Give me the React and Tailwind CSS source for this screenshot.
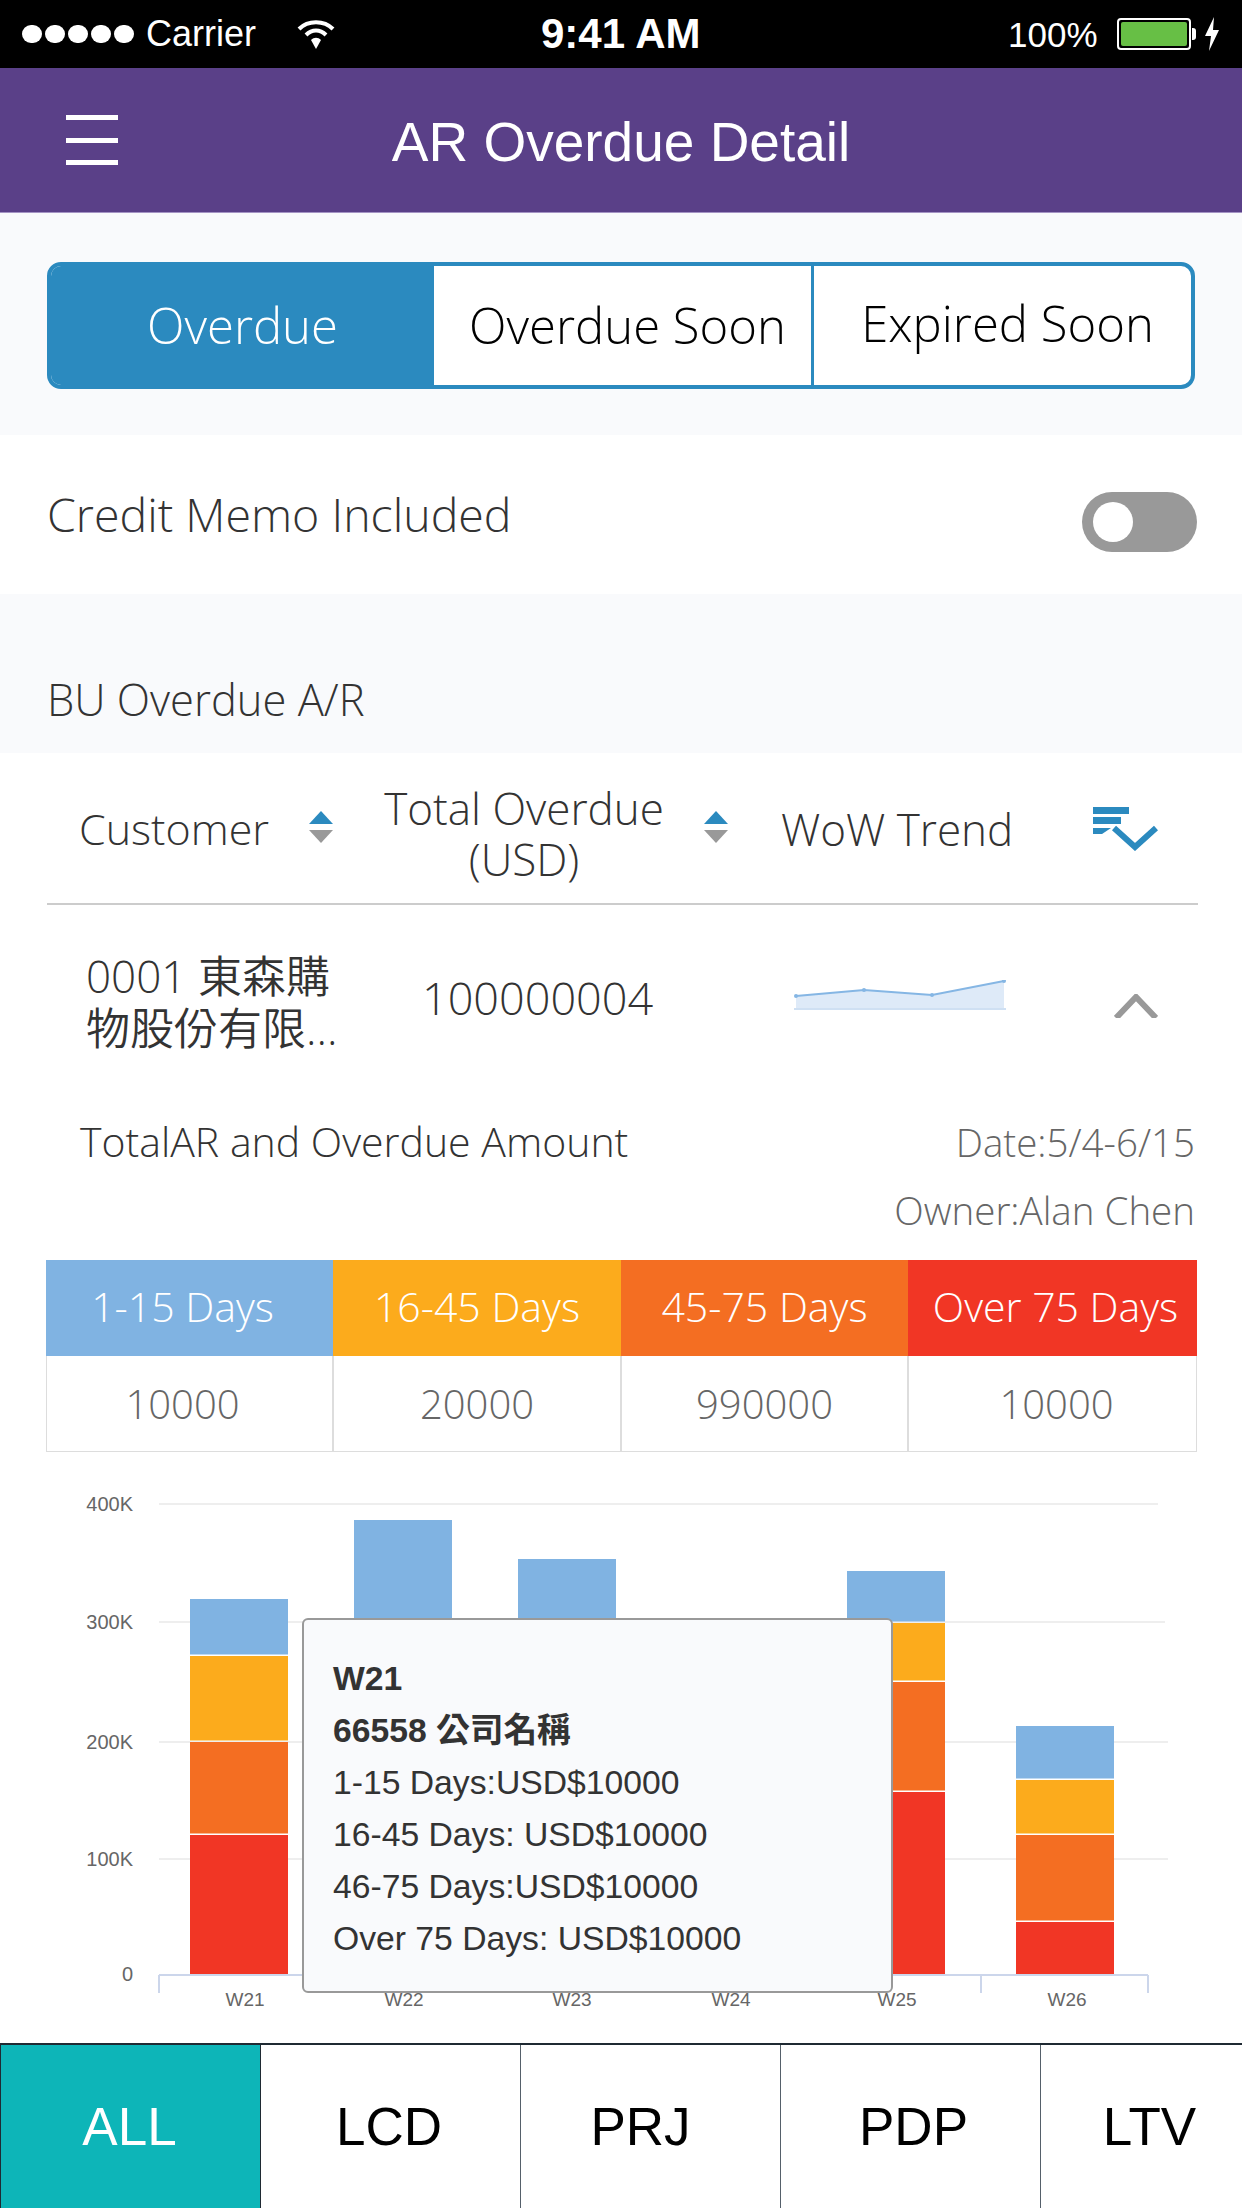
import React from "react";

const OPEN = "font-['Open_Sans',sans-serif]";

const DAY_BUCKETS = [
  { label: "1-15 Days", value: "10000", color: "bg-[#80b3e2]", width: "w-[287px]", head: "pr-[14px]", cell: "pr-[14px]" },
  { label: "16-45 Days", value: "20000", color: "bg-[#fcab1c]", width: "w-[288px]", head: "", cell: "" },
  { label: "45-75 Days", value: "990000", color: "bg-[#f46e22]", width: "w-[287px]", head: "", cell: "" },
  { label: "Over 75 Days", value: "10000", color: "bg-[#f13625]", width: "w-[289px]", head: "pl-[6px]", cell: "pl-[8px]" },
];

const BARS = [
  { x: 190, tops: [1599, 1656, 1742, 1835] },
  { x: 354, tops: [1520, 1640, 1742, 1840] },
  { x: 518, tops: [1559, 1640, 1742, 1840] },
  { x: 847, tops: [1571, 1623, 1682, 1792] },
  { x: 1016, tops: [1726, 1780, 1835, 1922] },
];
const BAR_COLORS = ["#80b3e2", "#fcab1c", "#f46e22", "#f13625"];

const GRID = [
  { y: 1504, label: "400K", end: 1158 },
  { y: 1622, label: "300K", end: 1165 },
  { y: 1742, label: "200K", end: 1168 },
  { y: 1859, label: "100K", end: 1168 },
];

const WEEKS = [
  { x: 245, label: "W21" },
  { x: 404, label: "W22" },
  { x: 572, label: "W23" },
  { x: 731, label: "W24" },
  { x: 897, label: "W25" },
  { x: 1067, label: "W26" },
];

function SortIcon() {
  return (
    <svg width="26" height="34" viewBox="0 0 26 34" className="shrink-0">
      <path d="M13 0 L25 13 H1 Z" fill="#2b8abf" />
      <path d="M1 19 H25 L13 32 Z" fill="#999999" />
    </svg>
  );
}

function StatusBar() {
  return (
    <div className="flex h-[68px] items-center bg-black text-white font-['Liberation_Sans',sans-serif]">
      <div className="ml-[22px] flex gap-[3px]">
        {[0, 1, 2, 3, 4].map((i) => (
          <div key={i} className="h-[18px] w-[20px] rounded-full bg-white" />
        ))}
      </div>
      <span className="ml-[12px] w-[112px] text-[36px] leading-none">Carrier</span>
      <svg width="40" height="32" viewBox="0 0 40 32" className="ml-[38px]">
        <path d="M3 11 C12 2 28 2 37 11" fill="none" stroke="#fff" strokeWidth="4" />
        <path d="M10 17 C16 11 24 11 30 17" fill="none" stroke="#fff" strokeWidth="4" />
        <path d="M15 22 L20 31 L25 22 C22 19 18 19 15 22 Z" fill="#fff" />
      </svg>
      <span className="ml-[205px] w-[180px] text-[42px] font-bold leading-none">9:41 AM</span>
      <span className="ml-[287px] text-[35px] leading-none">100%</span>
      <div className="relative ml-[19px] h-[32px] w-[74px] rounded-[4px] border-2 border-white p-[2px]">
        <div className="h-full w-full rounded-[2px] bg-[#67bf45]" />
        <div className="absolute right-[-7px] top-[8px] h-[12px] w-[4px] rounded-r-[3px] bg-white" />
      </div>
      <svg width="16" height="34" viewBox="0 0 16 34" className="ml-[13px]">
        <path d="M10 0 L1 19 H7 L5 34 L15 13 H9 Z" fill="#fff" />
      </svg>
    </div>
  );
}

function Header() {
  return (
    <div className="relative flex h-[145px] items-center justify-center border-b border-b-[#a493c4] bg-[#5a4088] pt-[4px]">
      <div className="absolute left-[66px] top-[47px] flex h-[50px] w-[52px] flex-col justify-between">
        <div className="h-[5px] bg-white" />
        <div className="h-[5px] bg-white" />
        <div className="h-[5px] bg-white" />
      </div>
      <span className="text-[55px] text-white font-['Liberation_Sans',sans-serif]">AR Overdue Detail</span>
    </div>
  );
}

function Segments() {
  return (
    <div className="h-[222px] bg-[#f9fafc] pl-[47px] pt-[49px]">
      <div className={`flex h-[127px] w-[1148px] overflow-hidden rounded-[14px] border-4 border-[#2b8abf] bg-white text-[49px] font-[350] text-black ${OPEN}`}>
        <div className="flex w-[383px] items-center justify-center bg-[#2b8abf] text-white">Overdue</div>
        <div className="flex w-[380px] items-center justify-center whitespace-nowrap border-r-[3px] border-r-[#2b8abf] pl-[10px]">Overdue Soon</div>
        <div className="flex flex-1 items-center justify-center whitespace-nowrap pb-[4px] pl-[10px]">Expired Soon</div>
      </div>
    </div>
  );
}

function TableHead() {
  return (
    <div className={`ml-[47px] flex h-[152px] w-[1151px] items-center border-b-2 border-b-[#cccccc] text-[44px] font-[350] leading-[51px] text-[#333333] ${OPEN}`}>
      <span className="ml-[32px] w-[229px] text-[43px]">Customer</span>
      <SortIcon />
      <div className="ml-[22px] w-[336px] pt-[12px] text-center">
        Total Overdue
        <br />
        (USD)
      </div>
      <div className="ml-[11px]">
        <SortIcon />
      </div>
      <span className="ml-[52px] w-[258px] whitespace-nowrap pt-[2px]">WoW Trend</span>
      <svg width="66" height="46" viewBox="0 0 66 46" className="ml-[54px]">
        <path d="M0 2 H36 V9 H0 Z M0 12 H28 V19 H0 Z M0 23 H18 L9 29 H0 Z" fill="#2b8abf" />
        <path d="M21 23 L42 42 L63 23" fill="none" stroke="#2b8abf" strokeWidth="6" />
      </svg>
    </div>
  );
}

function CustomerRow() {
  return (
    <div className={`flex h-[190px] items-center pb-[5px] font-[350] text-[#333333] ${OPEN}`}>
      <div className="ml-[86px] w-[260px] whitespace-nowrap pt-[8px] text-[44px] leading-[52px] font-['Open_Sans','Noto_Sans_CJK_TC',sans-serif]">
        0001 東森購
        <br />
        物股份有限...
      </div>
      <span className="ml-[76px] w-[372px] text-[45px]">100000004</span>
      <svg width="214" height="36" viewBox="0 0 214 36">
        <path d="M2 16 L70 10 L138 15 L210 1 V28 H2 Z" fill="#deeaf8" />
        <path d="M2 16 L70 10 L138 15 L210 1" fill="none" stroke="#85b6e4" strokeWidth="2" />
        <circle cx="2" cy="16" r="2" fill="#85b6e4" />
        <circle cx="70" cy="10" r="2" fill="#85b6e4" />
        <circle cx="138" cy="15" r="2" fill="#85b6e4" />
        <circle cx="210" cy="1" r="2" fill="#85b6e4" />
        <path d="M0 29 H212" stroke="#cfe0f3" strokeWidth="2" />
      </svg>
      <svg width="44" height="24" viewBox="0 0 44 24" className="ml-[106px] mt-[16px]">
        <path d="M2 24 L22 3 L42 24" fill="none" stroke="#999999" strokeWidth="6" />
      </svg>
    </div>
  );
}

function AmountTitle() {
  return (
    <div className={`flex h-[165px] justify-between pl-[80px] pr-[47px] pt-[13px] font-[350] ${OPEN}`}>
      <span className="text-[41px] leading-[66px] text-[#333333]">TotalAR and Overdue Amount</span>
      <div className="text-right text-[38.5px] leading-[68px] text-[#666666]">
        Date:5/4-6/15
        <br />
        Owner:Alan Chen
      </div>
    </div>
  );
}

function DayTable() {
  return (
    <div className={`ml-[46px] flex h-[192px] w-[1151px] font-[350] ${OPEN}`}>
      {DAY_BUCKETS.map((b) => (
        <div key={b.label} className={`flex flex-col ${b.width}`}>
          <div className={`flex h-[96px] items-center justify-center whitespace-nowrap pb-[3px] text-[41px] text-white ${b.color} ${b.head}`}>{b.label}</div>
          <div className={`flex h-[96px] items-center justify-center border border-t-0 border-[#dddddd] text-[40px] text-[#666666] ${b.cell}`}>
            {b.value}
          </div>
        </div>
      ))}
    </div>
  );
}

function Chart() {
  return (
    <div className="relative h-[591px]">
      <svg width="1242" height="591" viewBox="0 1452 1242 591" className="block font-['Liberation_Sans',sans-serif]">
        {GRID.map((g) => (
          <g key={g.label}>
            <path d={`M159 ${g.y} H${g.end}`} stroke="#eeeeee" strokeWidth="2" />
            <text x="133" y={g.y + 7} textAnchor="end" fontSize="20" fill="#666666">{g.label}</text>
          </g>
        ))}
        <text x="133" y="1981" textAnchor="end" fontSize="20" fill="#666666">0</text>
        {BARS.map((b) =>
          b.tops.map((top, i) => {
            const next = i < 3 ? b.tops[i + 1] : 1975;
            return <rect key={i} x={b.x} y={top} width="98" height={next - top - (i < 3 ? 1.5 : 0)} fill={BAR_COLORS[i]} />;
          })
        )}
        <path d="M159 1975 H1148 M159 1975 V1993 M981 1975 V1993 M1148 1975 V1993" fill="none" stroke="#ccd6eb" strokeWidth="2" />
        {WEEKS.map((w) => (
          <text key={w.label} x={w.x} y="2006" textAnchor="middle" fontSize="19" fill="#666666">{w.label}</text>
        ))}
      </svg>
      <div className="absolute left-[302px] top-[166px] h-[375px] w-[591px] rounded-[6px] border-2 border-[#999999] bg-[#f9fafc] pl-[29px] pt-[32px] text-[33.7px] leading-[52px] text-[#333333] font-['Liberation_Sans','Noto_Sans_CJK_TC',sans-serif]">
        <div className="font-bold">W21</div>
        <div className="font-bold">66558 公司名稱</div>
        <div>1-15 Days:USD$10000</div>
        <div>16-45 Days: USD$10000</div>
        <div>46-75 Days:USD$10000</div>
        <div>Over 75 Days: USD$10000</div>
      </div>
    </div>
  );
}

function BottomTabs() {
  const tabs = [
    { label: "LCD", cls: "w-[260px] pr-[3px]" },
    { label: "PRJ", cls: "w-[260px] pr-[20px]" },
    { label: "PDP", cls: "w-[260px] pl-[6px]" },
    { label: "LTV", cls: "w-[202px] pl-[16px]" },
  ];
  return (
    <div className="flex h-[165px] overflow-hidden border-t-2 border-t-[#1f2a33] text-[53px] text-black font-['Liberation_Sans',sans-serif]">
      <div className="flex w-[261px] shrink-0 items-center justify-center border-x border-x-[#1f2a33] bg-[#0db5b8] pr-[2px] text-white">ALL</div>
      {tabs.map((t) => (
        <div key={t.label} className={`flex shrink-0 items-center justify-center border-r border-r-[#55606a] ${t.cls}`}>
          {t.label}
        </div>
      ))}
    </div>
  );
}

export default function App() {
  return (
    <div className="h-[2208px] w-[1242px] overflow-hidden bg-white">
      <StatusBar />
      <Header />
      <Segments />
      <div className={`flex h-[159px] items-center pl-[47px] text-[46.5px] font-[350] text-[#333333] ${OPEN}`}>
        <span className="flex-1">Credit Memo Included</span>
        <div className="mr-[45px] mt-[14px] flex h-[60px] w-[115px] items-center rounded-full bg-[#999999] pl-[11px]">
          <div className="h-[40px] w-[40px] rounded-full bg-white" />
        </div>
      </div>
      <div className={`h-[159px] bg-[#f9fafc] pl-[47px] pt-[79px] text-[43.5px] font-[350] leading-[54px] text-[#333333] ${OPEN}`}>BU Overdue A/R</div>
      <TableHead />
      <CustomerRow />
      <AmountTitle />
      <DayTable />
      <Chart />
      <BottomTabs />
    </div>
  );
}
